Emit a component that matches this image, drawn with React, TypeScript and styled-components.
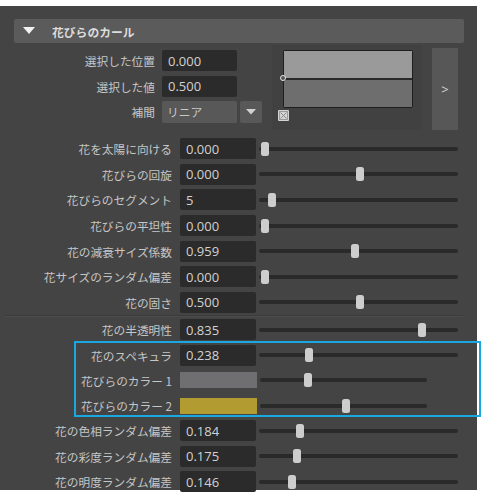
import React from "react";
import styled, { createGlobalStyle } from "styled-components";

const GlobalStyle = createGlobalStyle`
  html, body { margin: 0; padding: 0; background: #ffffff; }
  body { font-family: "Noto Sans CJK JP", "Noto Sans", sans-serif; }
`;

const Page = styled.div`
  width: 488px;
  height: 496px;
  padding-top: 6px;
  box-sizing: border-box;
`;

const Panel = styled.div`
  position: relative;
  width: 477px;
  height: 484px;
  background: #444444;
  padding-top: 13px;
  box-sizing: border-box;
`;

const Header = styled.div`
  display: flex;
  align-items: center;
  height: 24px;
  margin: 0 13px 0 14px;
  background: #5b5b5b;
  border-radius: 2px;
  padding-left: 9px;
  gap: 17px;
  box-sizing: border-box;
`;

const HeaderTitle = styled.span`
  font-size: 11.8px;
  font-weight: 700;
  color: #dcdcdc;
`;

const TopSection = styled.div`
  display: flex;
  align-items: flex-start;
  height: 91px;
  margin-top: 2px;
`;

const FieldColumn = styled.div`
  display: flex;
  flex-direction: column;
  padding-top: 3px;
  width: 272px;
`;

const TopRow = styled.div`
  display: flex;
  align-items: center;
  height: 25.5px;
`;

const Label = styled.div<{ $w: number }>`
  width: ${(p) => p.$w}px;
  text-align: right;
  font-size: 11.7px;
  color: #c6c6c6;
  white-space: nowrap;
  flex-shrink: 0;
`;

const Field = styled.div<{ $w: number; $ml: number }>`
  width: ${(p) => p.$w}px;
  height: 21px;
  margin-left: ${(p) => p.$ml}px;
  background: #2b2b2b;
  border-radius: 2px;
  box-sizing: border-box;
  padding-left: 6px;
  display: flex;
  align-items: center;
  font-family: "Open Sans", "Noto Sans", sans-serif;
  font-size: 13px;
  color: #d2d2d2;
  flex-shrink: 0;
`;

const Dropdown = styled.div`
  width: 75px;
  height: 22px;
  margin-left: 7px;
  background: #585858;
  border-radius: 2px;
  box-sizing: border-box;
  padding-left: 5px;
  display: flex;
  align-items: center;
  font-size: 11.7px;
  color: #c8c8c8;
`;

const DropButton = styled.div`
  width: 22px;
  height: 22px;
  margin-left: 3px;
  background: #585858;
  border-radius: 2px;
  display: flex;
  align-items: center;
  justify-content: center;
`;

const CurveArea = styled.div`
  position: relative;
  width: 150px;
  height: 85px;
  background: #414141;
  box-sizing: border-box;
  padding: 5px 0 0 11px;
`;

const CurveBox = styled.div`
  width: 130px;
  height: 58px;
  border: 1.5px solid #1e1e1e;
  border-radius: 2px;
  box-sizing: border-box;
  display: flex;
  flex-direction: column;
`;

const CurveHalf = styled.div<{ $c: string }>`
  flex: 1;
  background: ${(p) => p.$c};
`;

const CurveLine = styled.div`
  height: 1.5px;
  background: #2a2a2a;
`;

const CurvePoint = styled.div`
  position: absolute;
  left: 8px;
  top: 30px;
  width: 6px;
  height: 6px;
  border: 1.2px solid #e6e6e6;
  border-radius: 50%;
  background: #555;
  box-sizing: border-box;
`;

const DeleteIcon = styled.svg`
  display: block;
  margin: 2px 0 0 -5px;
`;

const ArrowButton = styled.div`
  width: 26px;
  height: 82px;
  margin: 3px 0 0 10px;
  background: #575757;
  display: flex;
  align-items: center;
  justify-content: center;
  font-family: "Open Sans", sans-serif;
  font-size: 13px;
  color: #d8d8d8;
`;

const Group = styled.div``;

const Row = styled.div<{ $h: number }>`
  display: flex;
  align-items: center;
  height: ${(p) => p.$h}px;
`;

const Swatch = styled.div<{ $c: string }>`
  width: 77px;
  height: 16px;
  margin-left: 8px;
  background: ${(p) => p.$c};
  flex-shrink: 0;
`;

const Slider = styled.div<{ $w: number }>`
  position: relative;
  width: ${(p) => p.$w}px;
  height: 14px;
  margin-left: 3px;
  display: flex;
  align-items: center;
`;

const Track = styled.div`
  width: 100%;
  height: 4px;
  border-radius: 2px;
  background: #2a2a2a;
`;

const Thumb = styled.div`
  position: absolute;
  top: 0;
  width: 8px;
  height: 14px;
  border-radius: 2.5px;
  background: #cdcdcd;
`;

const Separator = styled.div`
  height: 2px;
  margin: 0 14px 0 4px;
  border-top: 1px solid #3b3b3b;
  border-bottom: 1px solid #4c4c4c;
  box-sizing: border-box;
`;

const Highlight = styled.div`
  position: absolute;
  left: 74px;
  top: 335px;
  width: 407px;
  height: 76px;
  border: 2.5px solid #1aa8e2;
  box-sizing: border-box;
  pointer-events: none;
`;

type Item = { label: string; value?: string; color?: string; pos: number };

const group1: Item[] = [
  { label: "花を太陽に向ける", value: "0.000", pos: 0 },
  { label: "花びらの回旋", value: "0.000", pos: 0.508 },
  { label: "花びらのセグメント", value: "5", pos: 0.036 },
  { label: "花びらの平坦性", value: "0.000", pos: 0 },
  { label: "花の減衰サイズ係数", value: "0.959", pos: 0.483 },
  { label: "花サイズのランダム偏差", value: "0.000", pos: 0 },
  { label: "花の固さ", value: "0.500", pos: 0.508 },
];

const group2: Item[] = [
  { label: "花の半透明性", value: "0.835", pos: 0.84 },
  { label: "花のスペキュラ", value: "0.238", pos: 0.237 },
  { label: "花びらのカラー 1", color: "#6f6f72", pos: 0.223 },
  { label: "花びらのカラー 2", color: "#b29b30", pos: 0.43 },
  { label: "花の色相ランダム偏差", value: "0.184", pos: 0.186 },
  { label: "花の彩度ランダム偏差", value: "0.175", pos: 0.173 },
  { label: "花の明度ランダム偏差", value: "0.146", pos: 0.143 },
];

const SliderRow: React.FC<{ item: Item; h: number }> = ({ item, h }) => {
  const isColor = !!item.color;
  return (
    <Row $h={h}>
      <Label $w={172}>{item.label}</Label>
      {isColor ? (
        <Swatch $c={item.color!} />
      ) : (
        <Field $w={76} $ml={8}>
          {item.value}
        </Field>
      )}
      <Slider $w={isColor ? 167 : 199}>
        <Track />
        <Thumb style={{ left: 2 + item.pos * 187 }} />
      </Slider>
    </Row>
  );
};

export default function App() {
  return (
    <Page>
      <GlobalStyle />
      <Panel>
        <Header>
          <svg width="12" height="8" viewBox="0 0 12 8">
            <polygon points="0,0 12,0 6,7" fill="#f2f2f2" />
          </svg>
          <HeaderTitle>花びらのカール</HeaderTitle>
        </Header>
        <TopSection>
          <FieldColumn>
            <TopRow>
              <Label $w={155}>選択した位置</Label>
              <Field $w={75} $ml={7}>0.000</Field>
            </TopRow>
            <TopRow>
              <Label $w={155}>選択した値</Label>
              <Field $w={75} $ml={7}>0.500</Field>
            </TopRow>
            <TopRow>
              <Label $w={155}>補間</Label>
              <Dropdown>リニア</Dropdown>
              <DropButton>
                <svg width="10" height="6" viewBox="0 0 10 6">
                  <polygon points="0,0 10,0 5,5.5" fill="#d0d0d0" />
                </svg>
              </DropButton>
            </TopRow>
          </FieldColumn>
          <CurveArea>
            <CurveBox>
              <CurveHalf $c="#9a9a9a" />
              <CurveLine />
              <CurveHalf $c="#6e6e6e" />
            </CurveBox>
            <CurvePoint />
            <DeleteIcon width="11" height="11" viewBox="0 0 11 11">
              <rect x="0" y="0" width="11" height="11" rx="1" fill="#d4d4d4" />
              <rect x="1.5" y="1.5" width="8" height="8" fill="none" stroke="#9a9a9a" strokeWidth="1" />
              <path d="M2.5 2.5 L8.5 8.5 M8.5 2.5 L2.5 8.5" stroke="#8a8a8a" strokeWidth="1" />
            </DeleteIcon>
          </CurveArea>
          <ArrowButton>&gt;</ArrowButton>
        </TopSection>
        <Group>
          {group1.map((it) => (
            <SliderRow key={it.label} item={it} h={25.6} />
          ))}
        </Group>
        <Separator />
        <Group>
          {group2.map((it) => (
            <SliderRow key={it.label} item={it} h={25.3} />
          ))}
        </Group>
        <Highlight />
      </Panel>
    </Page>
  );
}
